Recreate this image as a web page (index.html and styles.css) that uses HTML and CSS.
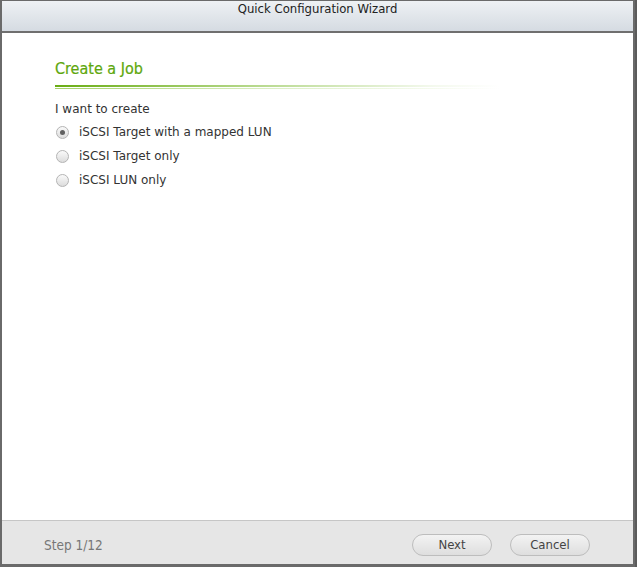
FILE: index.html
```html
<!DOCTYPE html>
<html>
<head>
<meta charset="utf-8">
<link rel="stylesheet" href="styles.css">
</head>
<body>
<div class="window">
  <div class="titlebar">Quick Configuration Wizard</div>
  <div class="content">
    <h2 class="heading">Create a Job</h2>
    <div class="rule"><div class="rule-thick"></div><div class="rule-thin"></div></div>
    <p class="prompt">I want to create</p>
    <ul class="options">
      <li class="option"><span class="radio checked"></span><span>iSCSI Target with a mapped LUN</span></li>
      <li class="option"><span class="radio"></span><span>iSCSI Target only</span></li>
      <li class="option"><span class="radio"></span><span>iSCSI LUN only</span></li>
    </ul>
  </div>
  <div class="footer">
    <span class="step">Step 1/12</span>
    <div class="buttons">
      <button class="btn">Next</button>
      <button class="btn">Cancel</button>
    </div>
  </div>
</div>
</body>
</html>
```

FILE: styles.css
```css
html, body {
  margin: 0;
  padding: 0;
  height: 567px;
  overflow: hidden;
}
body {
  background: #5b5b5b;
  font-family: "DejaVu Sans", Verdana, sans-serif;
}
.window {
  width: 631px;
  height: 563px;
  border: 2px solid #6a6a6a;
  border-top-width: 1px;
  border-bottom-width: 3px;
  background: #fff;
  display: flex;
  flex-direction: column;
}
.titlebar {
  height: 30px;
  border-bottom: 2px solid #6f6f6f;
  background: linear-gradient(#eef1f4, #d5dbe2);
  text-align: center;
  font-family: "DejaVu Sans Condensed", Tahoma, sans-serif;
  font-size: 13px;
  line-height: 15px;
  color: #222;
}
.content {
  flex: 1;
  padding: 26px 0 0 53px;
}
.heading {
  margin: 0;
  font-family: "DejaVu Sans Condensed", Tahoma, sans-serif;
  font-weight: normal;
  font-size: 16px;
  color: #5ea70d;
  line-height: 20px;
  -webkit-text-stroke: 0.2px #5ea70d;
}
.rule {
  width: 445px;
  margin-top: 6px;
}
.rule-thick {
  height: 2px;
  background: linear-gradient(to right, #6aad14, #b7d98d 45%, #f4f9ee 85%, #fff);
}
.rule-thin {
  height: 1px;
  margin-top: 1px;
  background: linear-gradient(to right, #a6d36c, #dcefc6 50%, #fff);
}
.prompt {
  margin: 12px 0 0;
  font-size: 12px;
  color: #333;
  line-height: 16px;
}
.options {
  list-style: none;
  margin: 3px 0 0;
  padding: 0;
}
.option {
  display: flex;
  align-items: center;
  height: 24px;
  font-size: 12px;
  color: #333;
}
.radio {
  width: 11px;
  height: 11px;
  border-radius: 50%;
  border: 1px solid #b4b4b4;
  background: linear-gradient(#fafafa, #dcdcdc);
  margin: 0 10px 0 1px;
  position: relative;
  box-sizing: content-box;
}
.radio.checked::after {
  content: "";
  position: absolute;
  left: 3px;
  top: 3px;
  width: 5px;
  height: 5px;
  border-radius: 50%;
  background: #606060;
}
.footer {
  height: 44px;
  box-sizing: border-box;
  padding: 4px 43px 0 42px;
  border-top: 1px solid #c6c6c6;
  background: #e6e6e6;
  display: flex;
  align-items: center;
  justify-content: space-between;
}
.step {
  font-family: "DejaVu Sans Condensed", Tahoma, sans-serif;
  font-size: 13.5px;
  color: #777;
}
.buttons {
  display: flex;
  gap: 18px;
}
.btn {
  width: 80px;
  height: 22px;
  border: 1px solid #bdbdbd;
  border-radius: 11px;
  background: linear-gradient(#f3f3f3, #dedede);
  font-family: "DejaVu Sans Condensed", Tahoma, sans-serif;
  font-size: 13px;
  color: #444;
  padding: 0;
}
```
